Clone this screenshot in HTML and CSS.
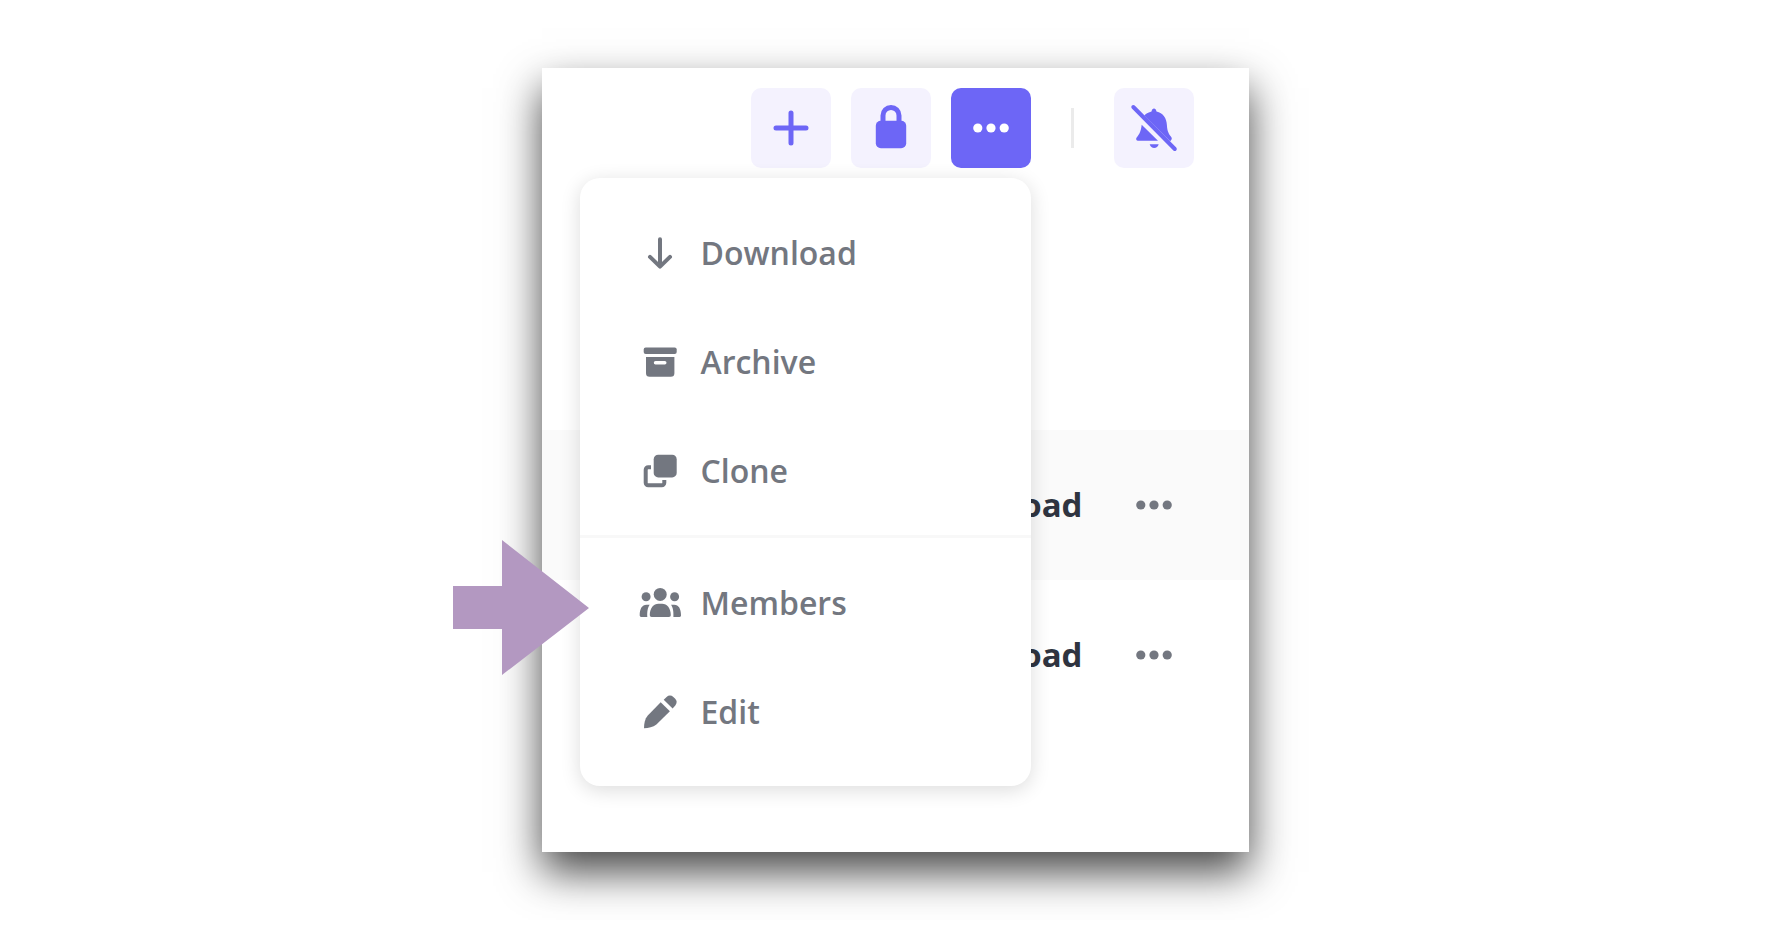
FILE: index.html
```html
<!DOCTYPE html>
<html lang="en">
<head>
    <meta charset="UTF-8">
    <meta name="viewport" content="width=device-width, initial-scale=1.0">
    <title>More actions</title>
    <link rel="stylesheet" href="styles.css">
</head>
<body>
    <main class="panel">
        <!-- Toolbar -->
        <header class="toolbar">
            <button type="button" class="icon-button" aria-label="Add">
                <svg viewBox="0 0 80 80"><path class="line" stroke-width="5" d="M40 25v30M25 40h30"/></svg>
            </button>
            <button type="button" class="icon-button" aria-label="Lock">
                <svg viewBox="0 0 80 80">
                    <rect x="24.8" y="32.7" width="30.4" height="27.6" rx="5"/>
                    <path class="line" stroke-width="5" d="M32 35v-7.500a8 8 0 0 1 16 0V35"/>
                </svg>
            </button>
            <div class="dropdown">
                <button type="button" class="icon-button active" aria-label="More" aria-expanded="true">
                    <svg viewBox="0 0 80 80"><circle cx="26.8" cy="40" r="4.6"/><circle cx="40" cy="40" r="4.6"/><circle cx="53.2" cy="40" r="4.6"/></svg>
                </button>

                <!-- Dropdown menu -->
                <div class="menu">
                    <button type="button" class="menu-item">
                        <svg viewBox="0 0 40 40"><path class="line" stroke-width="4" d="M20 7.3V34M10 24.9l10 9.7 10-9.7"/></svg>
                        Download
                    </button>
                    <button type="button" class="menu-item">
                        <svg viewBox="0 0 40 40">
                            <rect x="3.7" y="6.6" width="33" height="6.4" rx="2"/>
                            <path fill-rule="evenodd" d="M6 16h28.4v16.2a3.6 3.6 0 0 1-3.6 3.6H9.6a3.6 3.6 0 0 1-3.6-3.6zM15.5 20a1.6 1.6 0 0 0 0 3.4h9.3a1.6 1.6 0 0 0 0-3.4z"/>
                        </svg>
                        Archive
                    </button>
                    <button type="button" class="menu-item">
                        <svg viewBox="0 0 40 40">
                            <rect x="13.7" y="4.7" width="23" height="22.7" rx="4.5"/>
                            <path fill="none" stroke="currentColor" stroke-width="4" d="M11 17.3H8.2a2.5 2.5 0 0 0-2.5 2.5v13a2.5 2.5 0 0 0 2.5 2.5h13.6a2.5 2.5 0 0 0 2.5-2.5V30"/>
                        </svg>
                        Clone
                    </button>
                    <hr class="menu-divider">
                    <button type="button" class="menu-item">
                        <svg viewBox="0 0 40 40">
                            <circle cx="20.2" cy="12.4" r="6.5"/>
                            <circle cx="6.1" cy="14.7" r="4.5"/>
                            <circle cx="34.6" cy="14.7" r="4.5"/>
                            <path d="M9.8 33c0-6.8 3.7-11.3 8.7-11.3h3.6c5 0 8.7 4.5 8.7 11.3 0 1.300-.7 2-1.900 2H11.700c-1.200 0-1.900-.7-1.900-2z"/>
                            <path d="M-.3 33.300c0-6.500 2.300-10.600 6.800-10.600h3.200C7.800 25.500 7 29 7.300 35H1.200c-1 0-1.500-.7-1.500-1.700zM41 33.300c0-6.500-2.300-10.600-6.800-10.600H31c1.900 2.800 2.700 6.300 2.400 12.300h6.100c1 0 1.500-.7 1.500-1.700z"/>
                        </svg>
                        Members
                    </button>
                    <button type="button" class="menu-item">
                        <svg viewBox="0 0 40 40">
                            <path d="M20.700 11.200l9.200 9L16.400 33.400C13 36 8.500 37 4 37.200c.1-4.500.7-9 3.800-12.600z"/>
                            <path d="M23.700 8.700l2.900-2.800c2-1.900 4.700-1.900 6.700 0l1.700 1.700c2.200 2.100 2.200 4.600.3 6.800L32.600 17.500z"/>
                        </svg>
                        Edit
                    </button>
                </div>
            </div>
            <span class="toolbar-divider"></span>
            <button type="button" class="icon-button" aria-label="Notifications off">
                <svg viewBox="0 0 80 80">
                    <path d="M30.300 27.400c2-1.900 4.400-3.200 7.200-3.900.4-2 1.200-3 2.500-3s2.100 1 2.500 3C49 25 52.600 30 52.900 37c.3 6.500 2 9 4.500 12.300.9 1.500.2 2.700-1.300 3.900z"/>
                    <path d="M27.700 36.700L44 52.800H24c-1.600 0-2.400-1.500-1.500-3 3.500-4.600 4.300-6.600 5.200-13.100z"/>
                    <path d="M35.700 56.300h9c-.8 2.500-2.300 3.800-4.500 3.800s-3.700-1.300-4.500-3.800z"/>
                    <path class="line" stroke-width="4" d="M19.300 19l41.500 42"/>
                </svg>
            </button>
        </header>

        <!-- File rows -->
        <div class="rows">
            <div class="row shaded">
                <a href="#" class="row-link">Download</a>
                <button type="button" class="row-more" aria-label="Row options">
                    <svg viewBox="0 0 80 80"><circle cx="26.8" cy="40" r="4.6"/><circle cx="40" cy="40" r="4.6"/><circle cx="53.2" cy="40" r="4.6"/></svg>
                </button>
            </div>
            <div class="row">
                <a href="#" class="row-link">Download</a>
                <button type="button" class="row-more" aria-label="Row options">
                    <svg viewBox="0 0 80 80"><circle cx="26.8" cy="40" r="4.6"/><circle cx="40" cy="40" r="4.6"/><circle cx="53.2" cy="40" r="4.6"/></svg>
                </button>
            </div>
        </div>

        <!-- Arrow pointing at Members -->
        <svg class="pointer" viewBox="0 0 136 136"><path d="M0 46h49V0l87 68-87 67V89H0z"/></svg>
    </main>
</body>
</html>
```
FILE: styles.css
```css
/* Basic styling */
* {
    box-sizing: border-box;
}

body {
    margin: 0;
    padding: 68px 20px;
    font-family: "Open Sans", "Noto Sans", sans-serif;
    background-color: #fff;
}

button {
    padding: 0;
    border: none;
    font-family: inherit;
    cursor: pointer;
}

svg {
    display: block;
    fill: currentColor;
    overflow: visible;
}

.line {
    fill: none;
    stroke: currentColor;
    stroke-linecap: round;
    stroke-linejoin: round;
}

.panel {
    position: relative;
    max-width: 707px;
    margin: 0 auto;
    padding-bottom: 122px;
    background-color: #fff;
    box-shadow: 0 20px 40px rgba(0, 0, 0, 0.72);
}

/* Toolbar */
.toolbar {
    display: flex;
    justify-content: flex-end;
    align-items: center;
    gap: 20px;
    padding: 20px 55px 0 20px;
    margin-bottom: 262px;
}

.icon-button {
    display: block;
    width: 80px;
    height: 80px;
    color: #6d66f6;
    background-color: #f4f2fe;
    border-radius: 10px;
}

.icon-button.active {
    color: #fff;
    background-color: #6d66f6;
}

.toolbar-divider {
    width: 3px;
    height: 40px;
    margin: 0 20px;
    background-color: #ebebeb;
}

/* Dropdown menu */
.dropdown {
    position: relative;
}

.menu {
    position: absolute;
    top: calc(100% + 10px);
    right: 0;
    z-index: 1;
    width: 451px;
    padding: 20px 0;
    background-color: #fff;
    border-radius: 20px;
    box-shadow: 0 4px 20px rgba(0, 0, 0, 0.14);
}

.menu-item {
    display: flex;
    gap: 21px;
    width: 100%;
    padding: 34px 60px 33px;
    font-size: 32px;
    font-weight: 600;
    line-height: 42px;
    color: #737780;
    background: none;
}

.menu-item svg {
    width: 40px;
    height: 40px;
}

.menu-divider {
    height: 3px;
    margin: 10px 0;
    border: none;
    background-color: #f8f8f8;
}

/* File rows */
.row {
    display: flex;
    justify-content: flex-end;
    align-items: center;
    gap: 31px;
    height: 150px;
    padding-right: 55px;
}

.row.shaded {
    background-color: #fafafa;
}

.row-link {
    font-size: 33px;
    font-weight: 700;
    line-height: 42px;
    color: #2f3440;
    text-decoration: none;
}

.row-more {
    width: 80px;
    height: 80px;
    color: #737780;
    background: none;
}

.pointer {
    position: absolute;
    top: 472px;
    left: -89px;
    z-index: 2;
    width: 136px;
    height: 136px;
    color: #b398c1;
}
```
